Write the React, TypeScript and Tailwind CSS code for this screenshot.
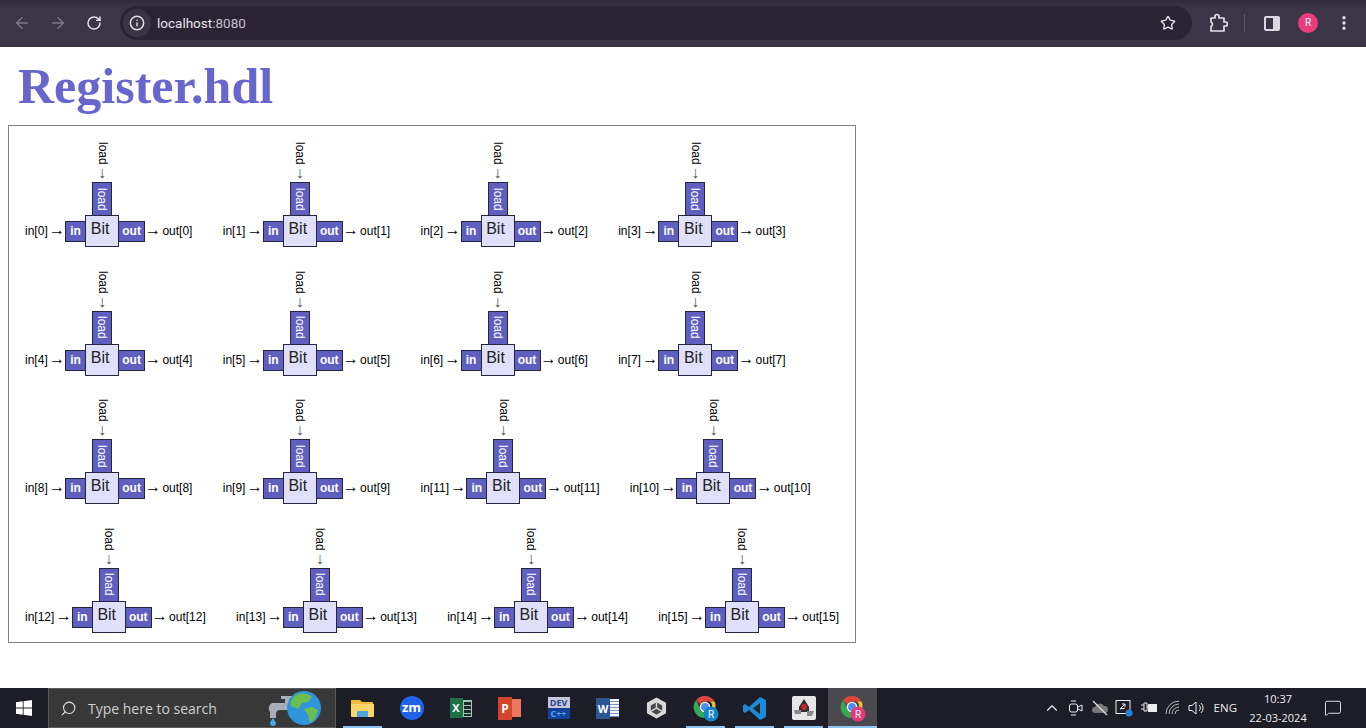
import { ArrowLeft, ArrowRight, RotateCw, Info, Star, EllipsisVertical, ChevronUp, Search, MessageSquare } from "lucide-react";

const rows = [
  ["0", "1", "2", "3"],
  ["4", "5", "6", "7"],
  ["8", "9", "11", "10"],
  ["12", "13", "14", "15"],
];

function Pin({ label, className }: { label: string; className: string }) {
  return (
    <div className={`h-[21px] bg-[#5f5fc0] border border-[#25253f] text-white font-bold text-[12px] leading-[19px] text-center ${className}`}>
      {label}
    </div>
  );
}

function Arrow() {
  return <span className="inline-flex w-[12px] justify-center text-[16px] leading-[12px]">→</span>;
}

function BitCell({ n }: { n: string }) {
  return (
    <div className="flex items-end text-[12px] text-black">
      <div className="mb-[8px] whitespace-nowrap leading-[15px] mr-[2px]">in[{n}] <Arrow /></div>
      <Pin label="in" className="mb-[5px] w-[21px] -mr-px" />
      <div className="flex flex-col items-center">
        <div className="[writing-mode:vertical-rl] leading-[14px] h-[23px] pl-px">load</div>
        <div className="h-[17px] leading-[16px] text-[16px] text-[#555]">↓</div>
        <div className="w-[20px] h-[34px] -mb-px bg-[#5f5fc0] border border-[#25253f] text-white [writing-mode:vertical-rl] text-center leading-[18px] pl-px">
          load
        </div>
        <div className="w-[34px] h-[32px] pr-[4px] bg-[#e0e0fa] border border-[#25253f] text-[16px] text-[#222] leading-[26px] text-center z-10">
          Bit
        </div>
      </div>
      <Pin label="out" className="mb-[5px] w-[27px] -ml-px" />
      <div className="mb-[8px] whitespace-nowrap leading-[15px] ml-[2px]"><Arrow /> out[{n}]</div>
    </div>
  );
}

function Toolbar() {
  return (
    <div className="h-[47px] bg-linear-to-b from-[#302b39] to-[#3c3547] to-[20%] border-b border-[#33303c] flex items-center pl-[4px] pr-[4px] text-[#e4e0ea]">
      <div className="w-9 flex justify-center text-[#7c7785]"><ArrowLeft size={18} /></div>
      <div className="w-9 flex justify-center text-[#7c7785]"><ArrowRight size={18} /></div>
      <div className="w-9 flex justify-center"><RotateCw size={16} strokeWidth={2.2} /></div>
      <div className="ml-[8px] w-[1072px] h-[34px] rounded-full bg-[#2a2333] flex items-center pl-[3px] pr-[16px]">
        <div className="w-[28px] h-[28px] rounded-full bg-[#3a3345] flex items-center justify-center">
          <Info size={16} strokeWidth={2.2} />
        </div>
        <span className="ml-[6px] text-[13.5px] text-[#e6e3ea] font-['Roboto',sans-serif]">
          localhost<span className="text-[#c4c0ca]">:8080</span>
        </span>
        <Star size={16} strokeWidth={2} className="ml-auto" />
      </div>
      <div className="ml-[16px] w-[20px] flex justify-center">
        <svg width="20" height="20" viewBox="0 0 20 20" fill="none" stroke="currentColor" strokeWidth="1.7">
          <path d="M3 5h4V3.500a2 2 0 0 1 4 0V5h5v4h1.500a2 2 0 0 1 0 4H16v5H3v-4.500a2.500 2.500 0 0 0 0-4.500z" strokeLinejoin="round" />
        </svg>
      </div>
      <div className="ml-[16px] w-px h-[18px] bg-[#5d5767]" />
      <div className="ml-[19px] w-[16px] h-[15px] rounded-[2px] border-2 border-[#dcd8e2] bg-[#dcd8e2] flex">
        <div className="w-[7px] bg-[#3b3446]" />
      </div>
      <div className="ml-[18px] w-[20px] h-[20px] rounded-full bg-[#ec3a7c] text-white text-[10px] font-['Roboto',sans-serif] leading-[20px] text-center">R</div>
      <div className="ml-[16px] w-[20px] flex justify-center"><EllipsisVertical size={18} strokeWidth={2.4} /></div>
    </div>
  );
}

function ChromeIcon({ badge }: { badge: string }) {
  return (
    <svg width="26" height="27" viewBox="0 0 26 27">
      <path d="M12 1a11 11 0 0 1 9.500 5.500H12a5.500 5.500 0 0 0-5 3L3.200 5A11 11 0 0 1 12 1z" fill="#e0453a" />
      <path d="M21.500 6.500A11 11 0 0 1 14 21.800l4-8a5.500 5.500 0 0 0-1-7.300z" fill="#f5c51f" />
      <path d="M3.200 5 7.500 14a5.500 5.500 0 0 0 6 3l-2.500 6A11 11 0 0 1 3.200 5z" fill="#36a853" />
      <circle cx="12" cy="12" r="4.600" fill="#4d8df0" stroke="#fff" strokeWidth="1.400" />
      <circle cx="18" cy="19" r="7.500" fill={badge} />
      <text x="18" y="22.500" fontSize="10" fill="#fff" textAnchor="middle" fontFamily="Roboto">R</text>
    </svg>
  );
}

const apps = [
  {
    active: true,
    icon: (
      <svg width="23" height="20" viewBox="0 0 23 20">
        <path d="M0 2h9l2 2h11v4H0z" fill="#f0b93a" />
        <path d="M0 6h23v12a1 1 0 0 1-1 1H1a1 1 0 0 1-1-1z" fill="#fbd46a" />
        <rect x="6" y="13" width="11" height="6" fill="#4aa3da" />
      </svg>
    ),
  },
  {
    icon: <div className="w-[24px] h-[24px] rounded-full bg-[#1f63e8] text-white text-[13px] font-bold leading-[23px] text-center">zm</div>,
  },
  {
    icon: (
      <div className="flex items-center">
        <div className="w-[13px] h-[20px] bg-[#1e7145] text-white text-[11px] font-bold leading-[20px] text-center z-10">X</div>
        <div className="w-[9px] h-[17px] border border-[#9fc8ae] bg-[repeating-linear-gradient(#9fc8ae_0_1px,#23262e_1px_4px)]" />
      </div>
    ),
  },
  {
    icon: (
      <div className="flex items-center">
        <div className="w-[14px] h-[23px] bg-[#d2452b] text-white text-[12px] font-bold leading-[23px] text-center z-10">P</div>
        <div className="w-[9px] h-[18px] bg-[#e9785f]" />
      </div>
    ),
  },
  {
    icon: (
      <div className="w-[22px] h-[22px] flex flex-col font-bold text-[9px] leading-[11px] text-center">
        <div className="bg-[#c5c8da] text-[#2b3f86]">DEV</div>
        <div className="bg-[#12409a] text-[#4aa6e8]">C++</div>
      </div>
    ),
  },
  {
    icon: (
      <div className="flex items-center">
        <div className="w-[14px] h-[21px] bg-[#2b5797] text-white text-[11px] font-bold leading-[21px] text-center z-10">W</div>
        <div className="w-[9px] h-[18px] bg-[repeating-linear-gradient(#f2f4f8_0_2px,#7d96c4_2px_3px)]" />
      </div>
    ),
  },
  {
    icon: (
      <svg width="21" height="24" viewBox="0 0 22 24">
        <path d="M11 1 21 6.500v11L11 23 1 17.500v-11z" fill="#d9d9d9" />
        <path d="M11 6l6 3.500v6L11 19l-6-3.500v-6z" fill="#4a4a4a" />
        <path d="M11 6v6l6 3.500M11 12l-6 3.500" stroke="#d9d9d9" strokeWidth="1.500" fill="none" />
      </svg>
    ),
  },
  { active: true, icon: <ChromeIcon badge="#1583c9" /> },
  {
    active: true,
    icon: (
      <svg width="25" height="25" viewBox="0 0 25 25">
        <path d="M18 1l6 3v17l-6 3L7 14l-4 3-2-1.500V9.500L3 8l4 3z" fill="#1d8ad6" />
        <path d="M18 7v11l-7-5.500z" fill="#23262e" />
      </svg>
    ),
  },
  {
    active: true,
    icon: (
      <svg width="24" height="24" viewBox="0 0 24 24">
        <rect width="24" height="24" rx="2" fill="#e6e6e6" />
        <path d="M12 3l5 8v5H7v-5z" fill="#2c2c2c" />
        <circle cx="12" cy="11" r="3" fill="#c0272d" />
        <path d="M2 14h7v4H3zM15 15h7l-2 5h-5z" fill="#8a8a8a" />
      </svg>
    ),
  },
  { active: true, current: true, icon: <ChromeIcon badge="#e8387c" /> },
];

function Taskbar() {
  return (
    <div className="h-[40px] bg-[#1c1d27] flex items-stretch text-[#e6e6e6] font-['Open_Sans',sans-serif]">
      <div className="w-[48px] flex items-center justify-center">
        <svg width="16" height="16" viewBox="0 0 16 16" fill="#fff">
          <path d="M0 2.300 6.800 1.300v6.300H0zM7.600 1.200 16 0v7.600H7.600zM0 8.400h6.800v6.300L0 13.700zM7.600 8.400H16V16l-8.400-1.200z" />
        </svg>
      </div>
      <div className="w-[288px] bg-[#383838] border border-[#5a5a5a] flex items-center pl-[11px] relative">
        <Search size={17} strokeWidth={1.500} className="-scale-x-100" />
        <span className="ml-[11px] text-[14px] text-[#cfcfcf]">Type here to search</span>
        <svg width="56" height="38" viewBox="0 0 56 38" className="absolute left-[219px] top-0">
          <path d="M4 14h13V10h-4V7h12v3h-4v4h5v10h-6v-3H12a4 4 0 0 0-4 4v4H2v-6a6 6 0 0 1 2-9z" fill="#a9adb8" />
          <path d="M5 29c2 3 3 4 3 5a3 3 0 0 1-6 0c0-1 1-2 3-5z" fill="#4ba8e6" />
          <circle cx="36" cy="19" r="17" fill="#2f95dc" />
          <path d="M30 5c5-2 12 0 14 3l-4 5-6 1-4 6-7-3c-1-5 2-10 7-12zM36 20l8-2 6 3-3 9-5 4-2-8z" fill="#6bbf4e" />
        </svg>
      </div>
      <div className="flex ml-[2px]">
        {apps.map((app, i) => (
          <div
            key={i}
            className={`w-[49px] flex items-center justify-center relative ${app.current ? "bg-[#4a4950]" : ""}`}
          >
            {app.icon}
            {app.active && (
              <div className={`absolute bottom-0 h-[2px] bg-[#8fc4ee] ${app.current ? "inset-x-0" : "inset-x-[5px]"}`} />
            )}
          </div>
        ))}
      </div>
      <div className="ml-auto flex items-center text-[#eeeeee]">
        <ChevronUp size={18} strokeWidth={1.500} />
        <svg width="16" height="18" viewBox="0 0 16 18" fill="none" stroke="currentColor" className="ml-[7px]">
          <rect x="1.500" y="5" width="8" height="8" rx="2" />
          <path d="M10 8l4-2v6l-4-2M3 2h5M3 16h5" />
        </svg>
        <svg width="18" height="16" viewBox="0 0 18 16" className="ml-[7px]">
          <path d="M4 13a3 3 0 0 1 0-6 5 5 0 0 1 9-1 3.500 3.500 0 0 1 1 7z" fill="#777" />
          <path d="M2 1l14 14" stroke="#ddd" strokeWidth="1.200" />
        </svg>
        <svg width="20" height="20" viewBox="0 0 20 20" fill="none" stroke="currentColor" className="ml-[6px]">
          <rect x="1" y="2.500" width="14" height="13" />
          <path d="M5 11l5-5M7 6h3v3M10 10l-5 1" />
          <circle cx="14" cy="15" r="3.500" fill="#2a7fd0" stroke="none" />
        </svg>
        <svg width="16" height="12" viewBox="0 0 16 12" fill="none" stroke="currentColor" className="ml-[6px]">
          <path d="M0 3h3M0 7h3M3 1h3v8H3zM6 5h2" />
          <rect x="7.500" y="2.500" width="8" height="7" fill="currentColor" />
        </svg>
        <svg width="18" height="16" viewBox="0 0 18 16" fill="none" stroke="#b5b5b5" className="ml-[8px]">
          <path d="M1 14A13 13 0 0 1 14 1M4 14A10 10 0 0 1 14 4M7 14a7 7 0 0 1 7-7M10 14a4 4 0 0 1 4-4" />
        </svg>
        <svg width="18" height="16" viewBox="0 0 18 16" fill="none" stroke="currentColor" className="ml-[5px]">
          <path d="M1 5.500h3L8 2v12l-4-3.500H1zM11 5a4 4 0 0 1 0 6M13 3a7 7 0 0 1 0 10" />
        </svg>
        <span className="ml-[8px] text-[11.5px] whitespace-nowrap">ENG</span>
        <div className="ml-[8px] w-[66px] text-[11px] leading-[19px] text-center whitespace-nowrap">
          <div>10:37</div>
          <div>22-03-2024</div>
        </div>
        <div className="ml-[13px] mr-[24px]">
          <MessageSquare size={18} strokeWidth={1.200} />
        </div>
      </div>
    </div>
  );
}

export default function App() {
  return (
    <div className="w-[1366px] h-[728px] flex flex-col bg-white overflow-hidden font-['Liberation_Sans',sans-serif]">
      <Toolbar />
      <div className="flex-1 pl-[8px]">
        <h1 className="ml-[10px] mt-[11px] h-[67px] text-[#6666cc] font-['Liberation_Serif',serif] font-bold text-[50px] leading-[56px]">
          Register.hdl
        </h1>
        <div className="w-[848px] h-[518px] border border-[#808080] flex flex-col pt-[16px] pl-[16px] gap-[23.6px]">
          {rows.map((row) => (
            <div key={row[0]} className="flex gap-[30.3px] h-[105px]">
              {row.map((b) => (
                <BitCell key={b} n={b} />
              ))}
            </div>
          ))}
        </div>
      </div>
      <Taskbar />
    </div>
  );
}
